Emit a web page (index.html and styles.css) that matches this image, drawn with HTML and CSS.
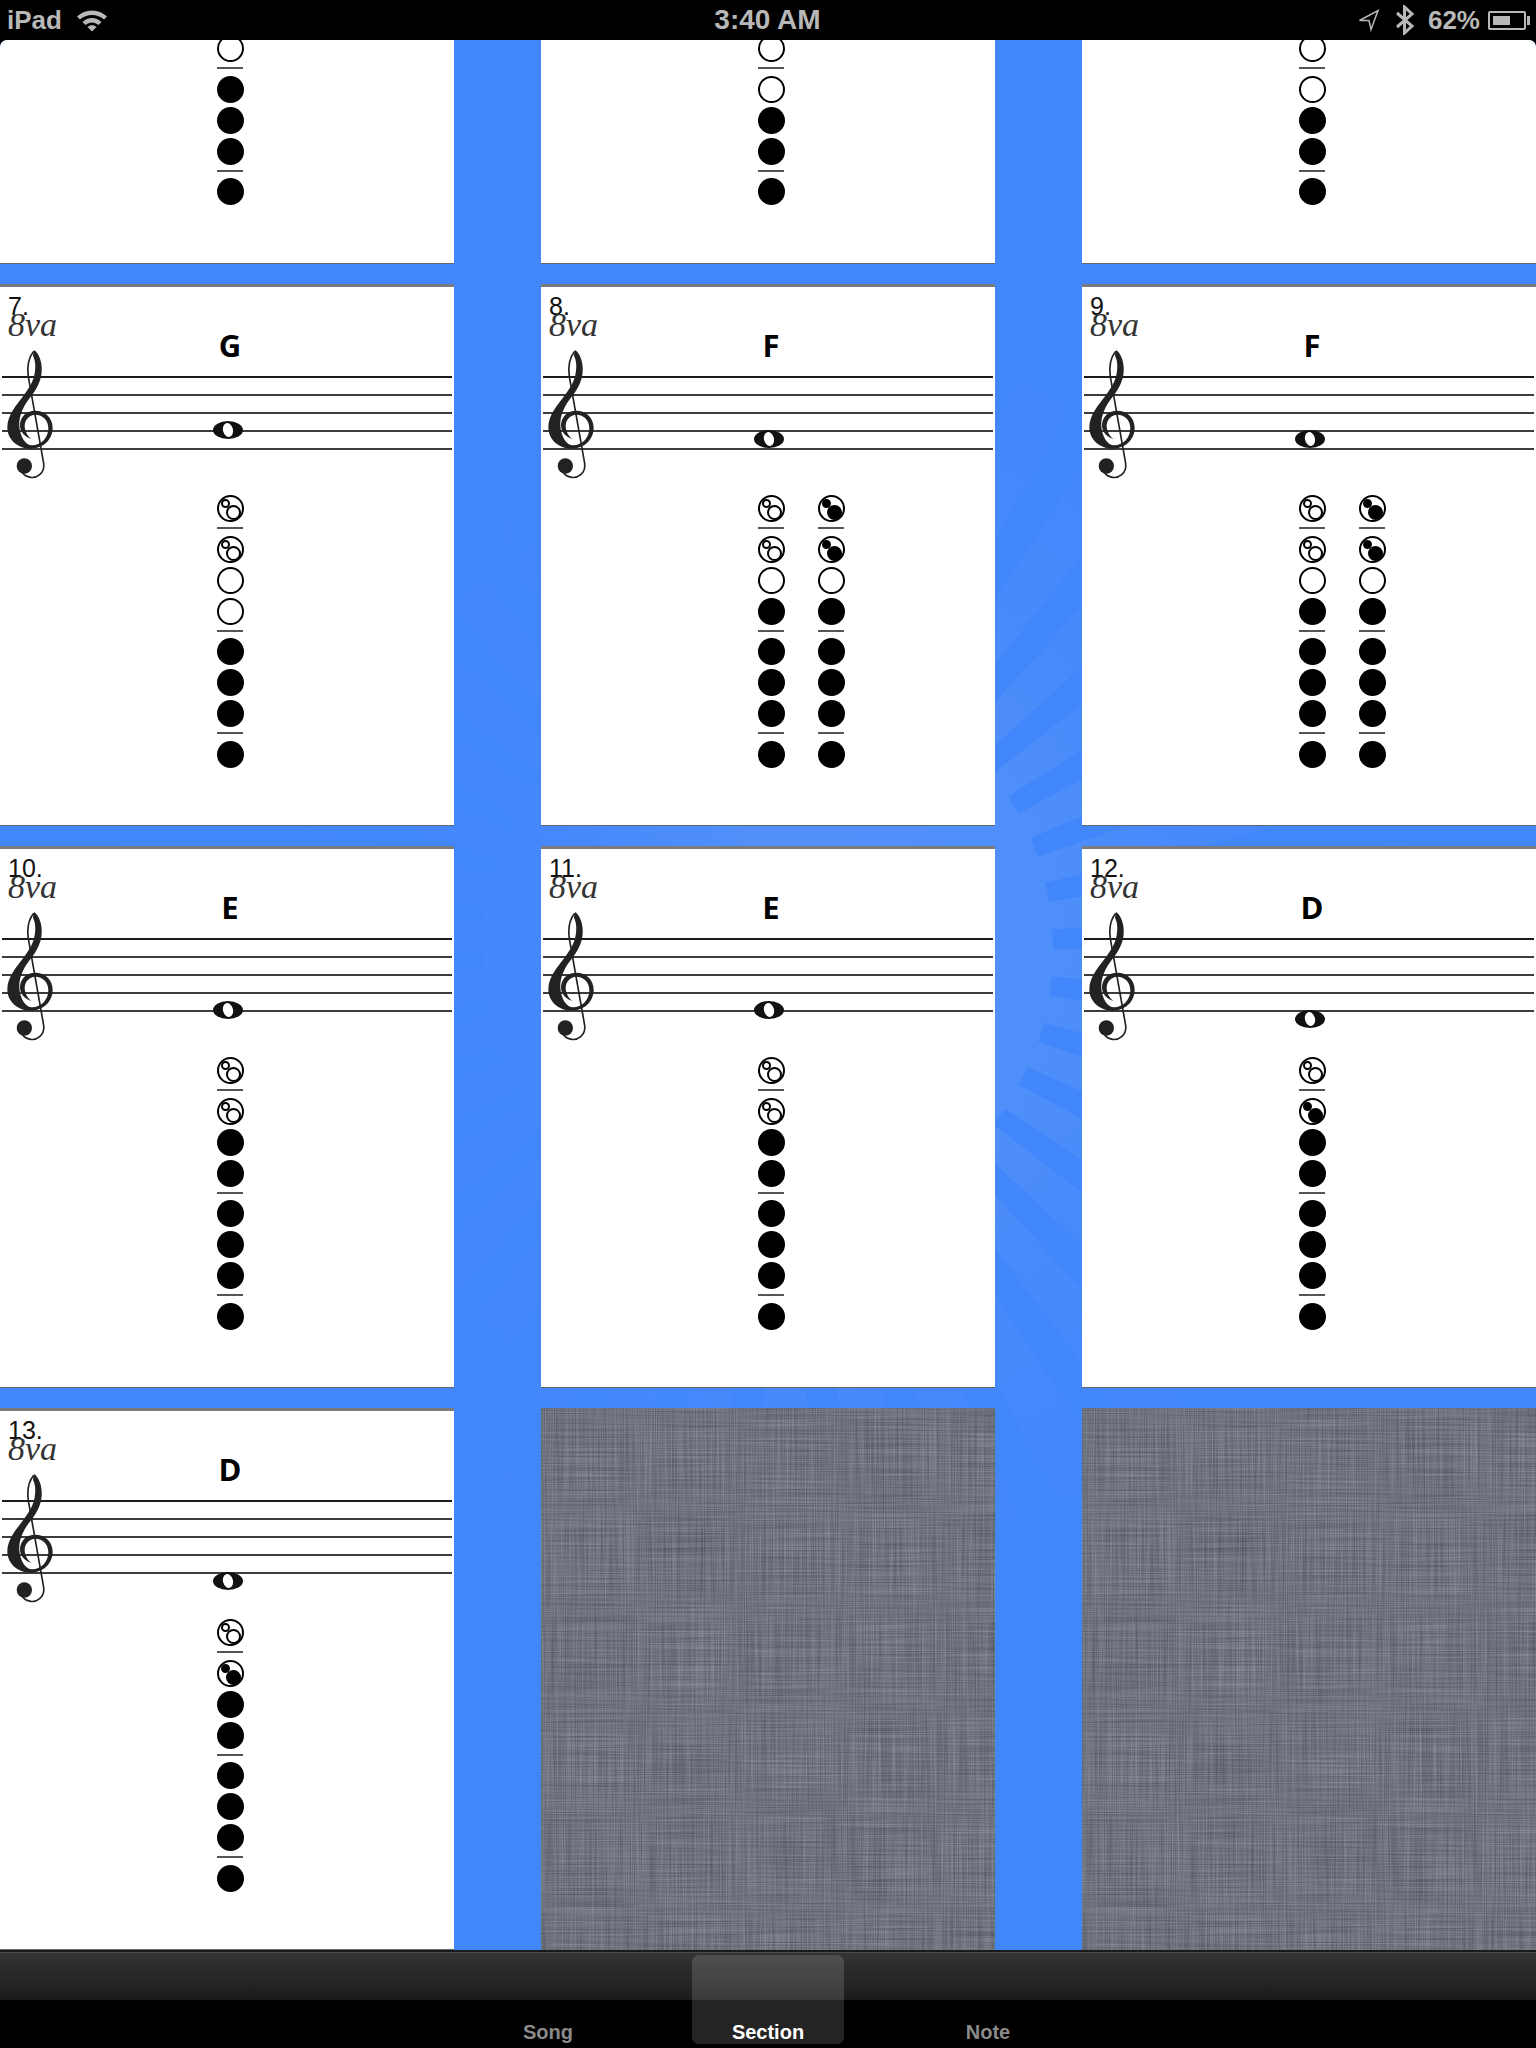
FILE: index.html
```html
<!DOCTYPE html>
<html>
<head>
    <title>Fingering Charts</title>
    <link rel="stylesheet" href="styles.css">
</head>
<body>
    <div class="status-bar">
        <div class="status-left">
            <span>iPad</span>
            <svg class="wifi" width="32" height="24" viewBox="0 0 32 24">
                <path d="M1 8.5C9 .5 23 .5 31 8.5L28 11.5C21.500 5.500 10.500 5.500 4 11.500Z"/>
                <path d="M6.500 14C12 8.500 20 8.500 25.500 14L22.500 17C18.500 13.500 13.500 13.500 9.500 17Z"/>
                <path d="M11.500 19C14 16.500 18 16.500 20.500 19L16 23.500Z"/>
            </svg>
        </div>
        <div class="status-time">3:40 AM</div>
        <div class="status-right">
            <svg class="arrow" width="22" height="24" viewBox="0 0 22 24">
                <path class="outline" d="M1.500 12.500L20 2.500L13 21.500L11 12.500Z"/>
            </svg>
            <svg class="bluetooth" width="20" height="30" viewBox="0 0 20 30">
                <path class="outline thick" d="M2 8L17 21L9.500 28V2L17 9L2 22"/>
            </svg>
            <span class="charge">62%</span>
            <div class="battery"><div class="battery-level"></div></div>
        </div>
    </div>

    <div class="board">
        <div class="grid">
            <!-- top row is scrolled mostly out of view -->
            <div class="card scrolled">
                <div class="fingering">
                    <div class="col">
                        <i class="key open"></i><div class="rule"></div>
                        <i class="key full"></i><i class="key full"></i><i class="key full"></i><div class="rule"></div>
                        <i class="key full"></i>
                    </div>
                </div>
            </div>
            <div class="card scrolled">
                <div class="fingering">
                    <div class="col">
                        <i class="key open"></i><div class="rule"></div>
                        <i class="key open"></i><i class="key full"></i><i class="key full"></i><div class="rule"></div>
                        <i class="key full"></i>
                    </div>
                </div>
            </div>
            <div class="card scrolled">
                <div class="fingering">
                    <div class="col">
                        <i class="key open"></i><div class="rule"></div>
                        <i class="key open"></i><i class="key full"></i><i class="key full"></i><div class="rule"></div>
                        <i class="key full"></i>
                    </div>
                </div>
            </div>

            <!-- 7 -->
            <div class="card">
                <div class="head">
                    <div class="tag"><div class="num">7.</div><div class="octave">8va</div></div>
                    <div class="name">G</div>
                </div>
                <div class="staff">
                    <svg class="clef"><use href="#clef"/></svg>
                    <div class="note note-g"></div>
                </div>
                <div class="fingering">
                    <div class="col">
                        <i class="key split"></i><div class="rule"></div>
                        <i class="key split"></i><i class="key open"></i><i class="key open"></i><div class="rule"></div>
                        <i class="key full"></i><i class="key full"></i><i class="key full"></i><div class="rule"></div>
                        <i class="key full"></i>
                    </div>
                </div>
            </div>

            <!-- 8 -->
            <div class="card">
                <div class="head">
                    <div class="tag"><div class="num">8.</div><div class="octave">8va</div></div>
                    <div class="name">F</div>
                </div>
                <div class="staff">
                    <svg class="clef"><use href="#clef"/></svg>
                    <div class="note note-f"></div>
                </div>
                <div class="fingering">
                    <div class="col">
                        <i class="key split"></i><div class="rule"></div>
                        <i class="key split"></i><i class="key open"></i><i class="key full"></i><div class="rule"></div>
                        <i class="key full"></i><i class="key full"></i><i class="key full"></i><div class="rule"></div>
                        <i class="key full"></i>
                    </div>
                    <div class="col">
                        <i class="key split shut"></i><div class="rule"></div>
                        <i class="key split shut"></i><i class="key open"></i><i class="key full"></i><div class="rule"></div>
                        <i class="key full"></i><i class="key full"></i><i class="key full"></i><div class="rule"></div>
                        <i class="key full"></i>
                    </div>
                </div>
            </div>

            <!-- 9 -->
            <div class="card">
                <div class="head">
                    <div class="tag"><div class="num">9.</div><div class="octave">8va</div></div>
                    <div class="name">F</div>
                </div>
                <div class="staff">
                    <svg class="clef"><use href="#clef"/></svg>
                    <div class="note note-f"></div>
                </div>
                <div class="fingering">
                    <div class="col">
                        <i class="key split"></i><div class="rule"></div>
                        <i class="key split"></i><i class="key open"></i><i class="key full"></i><div class="rule"></div>
                        <i class="key full"></i><i class="key full"></i><i class="key full"></i><div class="rule"></div>
                        <i class="key full"></i>
                    </div>
                    <div class="col">
                        <i class="key split shut"></i><div class="rule"></div>
                        <i class="key split shut"></i><i class="key open"></i><i class="key full"></i><div class="rule"></div>
                        <i class="key full"></i><i class="key full"></i><i class="key full"></i><div class="rule"></div>
                        <i class="key full"></i>
                    </div>
                </div>
            </div>

            <!-- 10 -->
            <div class="card">
                <div class="head">
                    <div class="tag"><div class="num">10.</div><div class="octave">8va</div></div>
                    <div class="name">E</div>
                </div>
                <div class="staff">
                    <svg class="clef"><use href="#clef"/></svg>
                    <div class="note note-e"></div>
                </div>
                <div class="fingering">
                    <div class="col">
                        <i class="key split"></i><div class="rule"></div>
                        <i class="key split"></i><i class="key full"></i><i class="key full"></i><div class="rule"></div>
                        <i class="key full"></i><i class="key full"></i><i class="key full"></i><div class="rule"></div>
                        <i class="key full"></i>
                    </div>
                </div>
            </div>

            <!-- 11 -->
            <div class="card">
                <div class="head">
                    <div class="tag"><div class="num">11.</div><div class="octave">8va</div></div>
                    <div class="name">E</div>
                </div>
                <div class="staff">
                    <svg class="clef"><use href="#clef"/></svg>
                    <div class="note note-e"></div>
                </div>
                <div class="fingering">
                    <div class="col">
                        <i class="key split"></i><div class="rule"></div>
                        <i class="key split"></i><i class="key full"></i><i class="key full"></i><div class="rule"></div>
                        <i class="key full"></i><i class="key full"></i><i class="key full"></i><div class="rule"></div>
                        <i class="key full"></i>
                    </div>
                </div>
            </div>

            <!-- 12 -->
            <div class="card">
                <div class="head">
                    <div class="tag"><div class="num">12.</div><div class="octave">8va</div></div>
                    <div class="name">D</div>
                </div>
                <div class="staff">
                    <svg class="clef"><use href="#clef"/></svg>
                    <div class="note note-d"></div>
                </div>
                <div class="fingering">
                    <div class="col">
                        <i class="key split"></i><div class="rule"></div>
                        <i class="key split shut"></i><i class="key full"></i><i class="key full"></i><div class="rule"></div>
                        <i class="key full"></i><i class="key full"></i><i class="key full"></i><div class="rule"></div>
                        <i class="key full"></i>
                    </div>
                </div>
            </div>

            <!-- 13 -->
            <div class="card">
                <div class="head">
                    <div class="tag"><div class="num">13.</div><div class="octave">8va</div></div>
                    <div class="name">D</div>
                </div>
                <div class="staff">
                    <svg class="clef"><use href="#clef"/></svg>
                    <div class="note note-d"></div>
                </div>
                <div class="fingering">
                    <div class="col">
                        <i class="key split"></i><div class="rule"></div>
                        <i class="key split shut"></i><i class="key full"></i><i class="key full"></i><div class="rule"></div>
                        <i class="key full"></i><i class="key full"></i><i class="key full"></i><div class="rule"></div>
                        <i class="key full"></i>
                    </div>
                </div>
            </div>

            <div class="linen"></div>
            <div class="linen"></div>
        </div>
    </div>

    <div class="tab-bar">
        <div class="tab">Song</div>
        <div class="tab selected">Section</div>
        <div class="tab">Note</div>
    </div>

    <svg class="defs" width="0" height="0">
        <symbol id="clef" viewBox="0 0 210 435">
            <path d="M103 30C118 42 127 68 125 95C123 125 108 150 92 170C72 195 56 225 58 258C60 292 78 316 96 316C125 316 145 292 145 265C145 240 128 224 106 224C88 224 74 240 74 258C74 275 84 290 96 298C76 292 60 278 60 256C60 230 80 212 106 212C135 212 158 232 158 264C158 300 128 326 92 326C52 326 22 298 22 262C22 225 50 195 72 165C88 143 100 125 104 100C108 75 105 60 100 50C98 46 100 36 103 30Z"/>
            <path class="clef-stem" d="M101 34C88 50 80 75 85 110L131 370C135 402 108 415 92 412C82 410 72 405 68 399"/>
            <circle cx="73" cy="378" r="23"/>
        </symbol>
        <!-- woven thread texture for the empty slots -->
        <filter id="linen" x="0" y="0" width="100%" height="100%" color-interpolation-filters="sRGB">
            <feTurbulence type="fractalNoise" baseFrequency="0.9 0.01" numOctaves="2" seed="3"/>
            <feColorMatrix values="1 0 0 0 0 1 0 0 0 0 1 0 0 0 0 0 0 0 0 1" result="warp"/>
            <feTurbulence type="fractalNoise" baseFrequency="0.01 0.9" numOctaves="2" seed="8"/>
            <feColorMatrix values="1 0 0 0 0 1 0 0 0 0 1 0 0 0 0 0 0 0 0 1" result="weft"/>
            <feComposite in="warp" in2="weft" operator="arithmetic" k2="0.5" k3="0.5"/>
            <feColorMatrix values="0.4 0 0 0 0.235 0.4 0 0 0 0.25 0.4 0 0 0 0.29 0 0 0 0 1"/>
        </filter>
    </svg>
</body>
</html>
```

FILE: styles.css
```css
body {
    margin: 0;
    width: 1536px;
    height: 2048px;
    overflow: hidden;
    background: #000;
    font-family: "Liberation Sans", Arial, sans-serif;
}
.status-bar {
    height: 40px;
    padding: 0 8px 0 7px;
    box-sizing: border-box;
    display: grid;
    grid-template-columns: 1fr auto 1fr;
    align-items: center;
    color: #b8b8b8;
    font-size: 26px;
    font-weight: bold;
}
.status-left {
    display: flex;
    align-items: center;
    gap: 14px;
}
.status-time {
    font-size: 28px;
}
.status-right {
    display: flex;
    align-items: center;
    justify-content: flex-end;
    gap: 12px;
}
.status-bar svg {
    fill: #b8b8b8;
}
.status-bar .outline {
    fill: none;
    stroke: #b8b8b8;
    stroke-width: 1.500;
}
.status-bar .thick {
    stroke-width: 3;
}
.arrow {
    margin-right: 3px;
}
.bluetooth {
    margin-right: 1px;
}
.battery {
    width: 38px;
    height: 19px;
    margin-left: -4px;
    margin-right: 2px;
    padding: 3px;
    box-sizing: border-box;
    border: 2px solid #b8b8b8;
    border-radius: 2px;
    position: relative;
}
.battery::after {
    content: "";
    position: absolute;
    right: -6px;
    top: 3px;
    width: 3px;
    height: 9px;
    background: #b8b8b8;
}
.battery-level {
    width: 17px;
    height: 100%;
    background: #b8b8b8;
}

/* sunburst behind the cards */
.board {
    height: 1910px;
    overflow: hidden;
    border-radius: 7px 7px 0 0;
    background:
        linear-gradient(90deg, rgba(66, 134, 252, .8) 541px, transparent 760px),
        radial-gradient(circle at 768px 910px, #5391fa 0, #4f8ffa 285px, transparent 285px),
        radial-gradient(circle at 768px 910px, transparent 285px, rgba(66, 134, 252, .5) 400px, #4286fc 650px),
        repeating-conic-gradient(from 0.570deg at 768px 910px, #4286fc 0 4deg, #4f8ffa 4deg 9.474deg),
        #4286fc;
}
.grid {
    margin-top: -318px;
    display: grid;
    grid-template-columns: repeat(3, 454px);
    grid-auto-rows: 542px;
    column-gap: 87px;
    row-gap: 20px;
}
.card {
    background: #fff;
    border-top: 3px solid #7b7b7d;
    border-bottom: 1px solid #666;
    box-sizing: border-box;
}
.card.scrolled {
    padding-top: 310px;
}
.head {
    height: 89px;
    display: grid;
}
.tag, .name {
    grid-area: 1 / 1;
}
.tag {
    padding: 7px 0 0 8px;
    color: #111;
}
.num {
    font-size: 25px;
    line-height: 25px;
}
.octave {
    margin-top: -11px;
    font-family: "Liberation Serif", serif;
    font-style: italic;
    font-size: 34px;
    line-height: 34px;
    color: #333;
}
.name {
    padding: 42px 0 0 6px;
    text-align: center;
    font-family: "Open Sans", sans-serif;
    font-weight: bold;
    font-size: 31px;
    line-height: 32px;
    color: #000;
}
.staff {
    height: 74px;
    margin: 0 2px 45px;
    position: relative;
    background:
        linear-gradient(#1c1c1c 0 2px, transparent 2px),
        repeating-linear-gradient(#3c3c3c 0 2px, transparent 2px 18px);
}
.clef {
    position: absolute;
    left: -2px;
    top: -36px;
    width: 70px;
    height: 145px;
    fill: #222;
}
.clef-stem {
    fill: none;
    stroke: #222;
    stroke-width: 5;
}
.note {
    position: absolute;
    left: 211px;
    width: 30px;
    height: 18px;
    margin-top: -9px;
    background: #111;
    border-radius: 50%;
}
.note::after {
    content: "";
    position: absolute;
    left: 10px;
    top: 2px;
    width: 10px;
    height: 14px;
    background: #fff;
    border-radius: 50%;
    transform: rotate(-15deg);
}
.note-g { top: 54px; }
.note-f { top: 63px; }
.note-e { top: 72px; }
.note-d { top: 81px; }
.fingering {
    padding-left: 217px;
    display: flex;
    gap: 33px;
}
.col {
    display: flex;
    flex-direction: column;
    gap: 4px;
}
.key {
    display: block;
    width: 27px;
    height: 27px;
    box-sizing: border-box;
    border-radius: 50%;
    position: relative;
}
.full {
    background: #000;
}
.open, .split {
    background: #fff;
    border: 2px solid #000;
}
.split::before, .split::after {
    content: "";
    position: absolute;
    box-sizing: border-box;
    border: 2px solid #000;
    border-radius: 50%;
}
.split::before {
    left: 2px;
    top: 2px;
    width: 9px;
    height: 9px;
}
.split::after {
    left: 7px;
    top: 8px;
    width: 15px;
    height: 15px;
}
.shut::before, .shut::after {
    background: #000;
}
.rule {
    width: 26px;
    height: 2px;
    margin: 1px 0 2.500px;
    background: #555;
}
.linen {
    background: #6e737d;
    filter: url(#linen);
}
.tab-bar {
    height: 98px;
    padding: 5px 0 4px;
    box-sizing: border-box;
    display: flex;
    justify-content: center;
    gap: 68px;
    background: linear-gradient(#1a1a1a 0 2px, #4a4a4a 2px 3px, #343434 3px, #1b1b1b 50px, #000 50px);
}
.tab {
    width: 152px;
    border-radius: 7px;
    display: flex;
    align-items: flex-end;
    justify-content: center;
    font-size: 20px;
    font-weight: bold;
    line-height: 24px;
    color: #8a8a8a;
}
.tab.selected {
    color: #fff;
    background: rgba(255, 255, 255, .14);
}
.defs {
    position: absolute;
}
```
